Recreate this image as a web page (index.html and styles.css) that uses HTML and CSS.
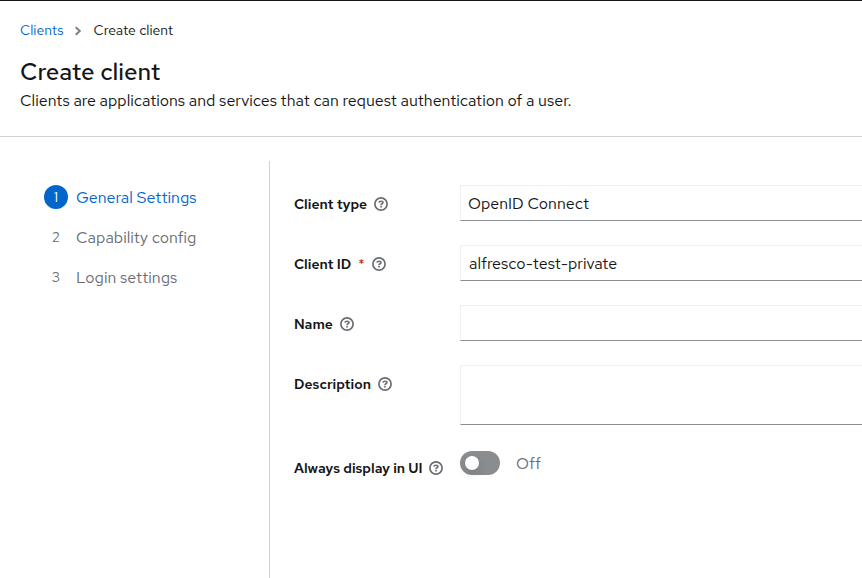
FILE: index.html
```html
<!DOCTYPE html>
<html lang="en">
<head>
<meta charset="utf-8">
<meta name="viewport" content="width=device-width, initial-scale=1">
<title>Create client</title>
<link rel="stylesheet" href="styles.css">
</head>
<body>
<svg class="sprite" aria-hidden="true">
  <symbol id="help" viewBox="0 0 14 14">
    <circle cx="7" cy="7" r="6.1" fill="none" stroke="currentColor" stroke-width="1.7"/>
    <path d="M4.9 5.6C5.1 4.5 5.9 4.2 7 4.2C8.2 4.2 9 4.7 9 5.6C9 6.8 7 6.6 7 7.9" fill="none" stroke="currentColor" stroke-width="1.6"/>
    <rect x="6.2" y="8.8" width="1.7" height="1.6" rx=".2" fill="currentColor"/>
  </symbol>
</svg>
<header class="page-header">
  <nav aria-label="Breadcrumb">
    <ol class="breadcrumb">
      <li><a href="#">Clients</a></li>
      <li>
        <svg class="chevron" viewBox="0 0 8 10" aria-hidden="true"><path d="M1.7 1.2L5.8 5L1.7 8.8"/></svg>
        <span aria-current="page">Create client</span>
      </li>
    </ol>
  </nav>
  <h1>Create client</h1>
  <p>Clients are applications and services that can request authentication of a user.</p>
</header>
<div class="wizard">
  <nav class="steps" aria-label="Steps">
    <ol>
      <li><a class="step current" href="#" aria-current="step"><span class="number">1</span>General Settings</a></li>
      <li><a class="step" href="#"><span class="number">2</span>Capability config</a></li>
      <li><a class="step" href="#"><span class="number">3</span>Login settings</a></li>
    </ol>
  </nav>
  <main>
    <form class="form">
      <div class="label">
        <label for="type">Client type</label>
        <button type="button" class="help" aria-label="Help for client type"><svg><use href="#help"/></svg></button>
      </div>
      <select id="type" class="control"><option>OpenID Connect</option></select>

      <div class="label">
        <label for="client-id">Client ID <span class="required">*</span></label>
        <button type="button" class="help" aria-label="Help for client ID"><svg><use href="#help"/></svg></button>
      </div>
      <input id="client-id" class="control" type="text" value="alfresco-test-private" required>

      <div class="label">
        <label for="name">Name</label>
        <button type="button" class="help" aria-label="Help for name"><svg><use href="#help"/></svg></button>
      </div>
      <input id="name" class="control" type="text">

      <div class="label">
        <label for="description">Description</label>
        <button type="button" class="help" aria-label="Help for description"><svg><use href="#help"/></svg></button>
      </div>
      <textarea id="description" class="control"></textarea>

      <div class="label">
        <label for="display">Always display in UI</label>
        <button type="button" class="help" aria-label="Help for always display in UI"><svg><use href="#help"/></svg></button>
      </div>
      <div class="switch-row">
        <input id="display" class="switch" type="checkbox" role="switch">
        <span>Off</span>
      </div>
    </form>
  </main>
</div>
</body>
</html>
```

FILE: styles.css
```css
* {
  box-sizing: border-box;
}

body {
  margin: 0;
  min-height: 100vh;
  display: flex;
  flex-direction: column;
  border-top: 1px solid #151515;
  background: #fff;
  color: #151515;
  font-family: "Red Hat Text", Inter, "Liberation Sans", sans-serif;
  font-size: 16px;
  line-height: 24px;
}

.sprite {
  display: none;
}

a {
  color: #06c;
  text-decoration: none;
}

ol {
  margin: 0;
  padding: 0;
  list-style: none;
}

.page-header {
  padding: 19px 20px 23px;
  border-bottom: 1px solid #d2d2d2;
}

.breadcrumb {
  display: flex;
  font-size: 14px;
  line-height: 21px;
}

.breadcrumb li {
  display: flex;
  align-items: center;
}

.chevron {
  width: 8px;
  height: 10px;
  margin: 0 11px;
  fill: none;
  stroke: #7d8084;
  stroke-width: 2;
}

h1 {
  margin: 16px 0 2px;
  font-size: 24px;
  font-weight: 500;
  line-height: 30px;
}

p {
  margin: 0;
}

.wizard {
  flex: 1;
  display: flex;
  padding-top: 24px;
}

.steps {
  flex: 0 0 270px;
  padding: 24px 24px 0 44px;
  border-right: 1px solid #d2d2d2;
}

.steps ol {
  display: grid;
  gap: 14px;
}

.step {
  display: flex;
  gap: 8px;
  color: #6a6e73;
  line-height: 26px;
}

.number {
  width: 24px;
  height: 24px;
  border-radius: 50%;
  font-size: 14px;
  line-height: 24px;
  text-align: center;
}

.current {
  color: #06c;
}

.current .number {
  background: #06c;
  color: #fff;
}

main {
  flex: 1;
  padding: 24px 0 24px 24px;
}

.form {
  display: grid;
  grid-template-columns: 150px 1fr;
  gap: 24px 16px;
}

.label {
  display: flex;
  align-items: center;
  align-self: start;
  gap: 7px;
  padding-top: 8px;
  font-size: 14px;
  font-weight: 600;
  line-height: 22px;
  white-space: nowrap;
}

.required {
  margin-left: 4px;
  color: #c9190b;
  font-weight: 400;
}

.help {
  display: flex;
  padding: 0;
  border: 0;
  background: none;
  color: #6a6e73;
}

.help svg {
  width: 14px;
  height: 14px;
}

.control {
  width: 100%;
  height: 36px;
  padding: 0 8px;
  border: 1px solid #f0f0f0;
  border-right: 0;
  border-bottom-color: #8a8d90;
  border-radius: 0;
  outline: 0;
  appearance: none;
  background: #fff;
  color: #151515;
  font: inherit;
}

select.control {
  padding: 2px 7px 0;
}

textarea.control {
  display: block;
  height: 60px;
  resize: none;
}

.switch-row {
  display: flex;
  align-items: flex-start;
  gap: 16px;
  padding-top: 2px;
  color: #6a6e73;
  line-height: 26px;
}

.switch {
  appearance: none;
  display: flex;
  align-items: center;
  width: 40px;
  height: 24px;
  margin: 0;
  padding-left: 5px;
  border-radius: 12px;
  background: #8a8d90;
}

.switch::before {
  content: "";
  width: 14px;
  height: 14px;
  border-radius: 50%;
  background: #fff;
  box-shadow: 0 4px 8px rgba(3, 3, 3, .12);
}

.switch:checked {
  justify-content: flex-end;
  padding: 0 5px;
  background: #06c;
}
```
